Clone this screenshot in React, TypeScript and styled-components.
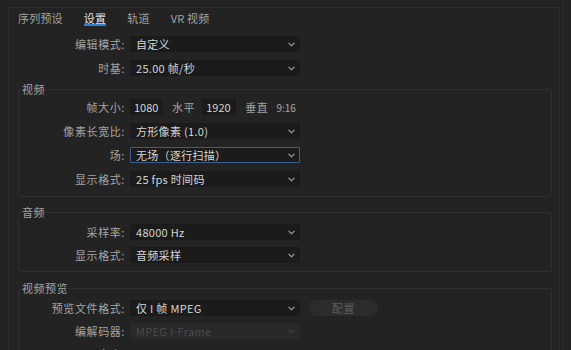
import styled, { createGlobalStyle } from 'styled-components';

const GlobalStyle = createGlobalStyle`
  html, body {
    margin: 0;
    padding: 0;
    background: #232323;
    overflow: hidden;
  }
  body {
    font-family: "Noto Sans CJK SC", "Noto Sans", sans-serif;
    font-size: 11px;
    color: #a9a9a9;
  }
`;

const Page = styled.div`
  width: 563px;
  height: 350px;
  border-right: 1px solid #2b2b2b;
  overflow: hidden;
`;

const Frame = styled.div`
  margin: 7px 0 0 8px;
  width: 552px;
  height: 400px;
  box-sizing: border-box;
  border: 1px solid #2c2c2c;
  border-bottom: none;
`;

const Tabs = styled.div`
  display: flex;
  gap: 21px;
  padding: 4px 0 0 9px;
`;

const Tab = styled.div<{ $active?: boolean }>`
  line-height: 12px;
  font-size: 11px;
  letter-spacing: 0.2px;
  color: ${(p) => (p.$active ? '#e2e2e2' : '#a2a2a2')};
  border-bottom: 2px solid ${(p) => (p.$active ? '#2d7fd8' : 'transparent')};
`;

const Rows = styled.div<{ $gap: number }>`
  display: flex;
  flex-direction: column;
  gap: ${(p) => p.$gap}px;
`;

const TopRows = styled(Rows)`
  margin-top: 10px;
`;

const Row = styled.div`
  display: flex;
  align-items: center;
  height: 16px;
`;

const Label = styled.div<{ $w: number }>`
  width: ${(p) => p.$w}px;
  text-align: right;
  padding-right: 5px;
  box-sizing: content-box;
  color: #a3a3a3;
  white-space: nowrap;
  letter-spacing: 0.6px;
`;

const Select = styled.div<{ $focus?: boolean; $disabled?: boolean }>`
  width: 170px;
  height: 16px;
  box-sizing: border-box;
  display: flex;
  align-items: center;
  justify-content: space-between;
  padding: 0 4px 0 5px;
  background: ${(p) => (p.$disabled ? '#292929' : '#1b1b1b')};
  border: 1px solid ${(p) => (p.$focus ? '#3a5f8c' : 'transparent')};
  border-radius: 1px;
  color: ${(p) => (p.$disabled ? '#4c4c4c' : '#d4d4d4')};
  letter-spacing: 0.3px;
  white-space: nowrap;
`;

const Chevron = styled.svg<{ $disabled?: boolean }>`
  width: 7px;
  height: 5px;
  stroke: ${(p) => (p.$disabled ? '#4a4a4a' : '#a8a8a8')};
  fill: none;
  stroke-width: 1.1;
`;

const NumInput = styled.div<{ $w: number; $ml?: number }>`
  width: ${(p) => p.$w}px;
  height: 16px;
  margin-left: ${(p) => p.$ml ?? 0}px;
  box-sizing: border-box;
  padding-left: 4px;
  display: flex;
  align-items: center;
  background: #1b1b1b;
  color: #d4d4d4;
`;

const Unit = styled.span<{ $ml: number }>`
  margin-left: ${(p) => p.$ml}px;
  color: #a3a3a3;
  letter-spacing: 0.6px;
`;

const Ratio = styled.span`
  margin-left: 8px;
  color: #a6a6a6;
  font-size: 10px;
`;

const Section = styled.fieldset<{ $mt: number; $pt: number; $pb: number }>`
  margin: ${(p) => p.$mt}px 7px 0 9px;
  padding: ${(p) => p.$pt}px 0 ${(p) => p.$pb}px 3px;
  border: 1px solid #2f2f2f;
  border-radius: 3px;
  min-width: 0;
`;

const Legend = styled.legend`
  padding: 0;
  line-height: 14px;
  color: #a3a3a3;
  letter-spacing: 0.5px;
`;

const Button = styled.div`
  margin-left: 9px;
  width: 69px;
  height: 16px;
  border-radius: 8px;
  background: #2c2c2c;
  color: #5e5e5e;
  display: flex;
  align-items: center;
  justify-content: center;
  letter-spacing: 0.5px;
`;

const BlueValue = styled.span`
  color: #3b78c4;
  text-decoration: underline;
`;

const Arrow = ({ disabled }: { disabled?: boolean }) => (
  <Chevron $disabled={disabled} viewBox="0 0 7 5">
    <path d="M0.6 0.8 L3.5 3.8 L6.4 0.8" />
  </Chevron>
);

const Dropdown = ({ value, focus, disabled }: { value: string; focus?: boolean; disabled?: boolean }) => (
  <Select $focus={focus} $disabled={disabled}>
    <span>{value}</span>
    <Arrow disabled={disabled} />
  </Select>
);

const TOP_W = 116;
const SEC_W = 103;

export default function App() {
  return (
    <>
      <GlobalStyle />
      <Page>
        <Frame>
          <Tabs>
            <Tab>序列预设</Tab>
            <Tab $active>设置</Tab>
            <Tab>轨道</Tab>
            <Tab>VR 视频</Tab>
          </Tabs>

          <TopRows $gap={8}>
            <Row>
              <Label $w={TOP_W}>编辑模式:</Label>
              <Dropdown value="自定义" />
            </Row>
            <Row>
              <Label $w={TOP_W}>时基:</Label>
              <Dropdown value="25.00  帧/秒" />
            </Row>
          </TopRows>

          <Section $mt={6} $pt={3} $pb={9}>
            <Legend>视频</Legend>
            <Rows $gap={8}>
              <Row>
                <Label $w={SEC_W}>帧大小:</Label>
                <NumInput $w={33}>1080</NumInput>
                <Unit $ml={9}>水平</Unit>
                <NumInput $w={34} $ml={7}>1920</NumInput>
                <Unit $ml={9}>垂直</Unit>
                <Ratio>9:16</Ratio>
              </Row>
              <Row>
                <Label $w={SEC_W}>像素长宽比:</Label>
                <Dropdown value="方形像素 (1.0)" />
              </Row>
              <Row>
                <Label $w={SEC_W}>场:</Label>
                <Dropdown value="无场（逐行扫描）" focus />
              </Row>
              <Row>
                <Label $w={SEC_W}>显示格式:</Label>
                <Dropdown value="25 fps 时间码" />
              </Row>
            </Rows>
          </Section>

          <Section $mt={8} $pt={5} $pb={8}>
            <Legend>音频</Legend>
            <Rows $gap={7}>
              <Row>
                <Label $w={SEC_W}>采样率:</Label>
                <Dropdown value="48000 Hz" />
              </Row>
              <Row>
                <Label $w={SEC_W}>显示格式:</Label>
                <Dropdown value="音频采样" />
              </Row>
            </Rows>
          </Section>

          <Section $mt={9} $pt={5} $pb={8}>
            <Legend>视频预览</Legend>
            <Rows $gap={7}>
              <Row>
                <Label $w={SEC_W}>预览文件格式:</Label>
                <Dropdown value="仅 I 帧 MPEG" />
                <Button>配置</Button>
              </Row>
              <Row>
                <Label $w={SEC_W}>编解码器:</Label>
                <Dropdown value="MPEG I-Frame" disabled />
              </Row>
              <Row>
                <Label $w={SEC_W}>宽度:</Label>
                <BlueValue>1920</BlueValue>
              </Row>
            </Rows>
          </Section>
        </Frame>
      </Page>
    </>
  );
}
